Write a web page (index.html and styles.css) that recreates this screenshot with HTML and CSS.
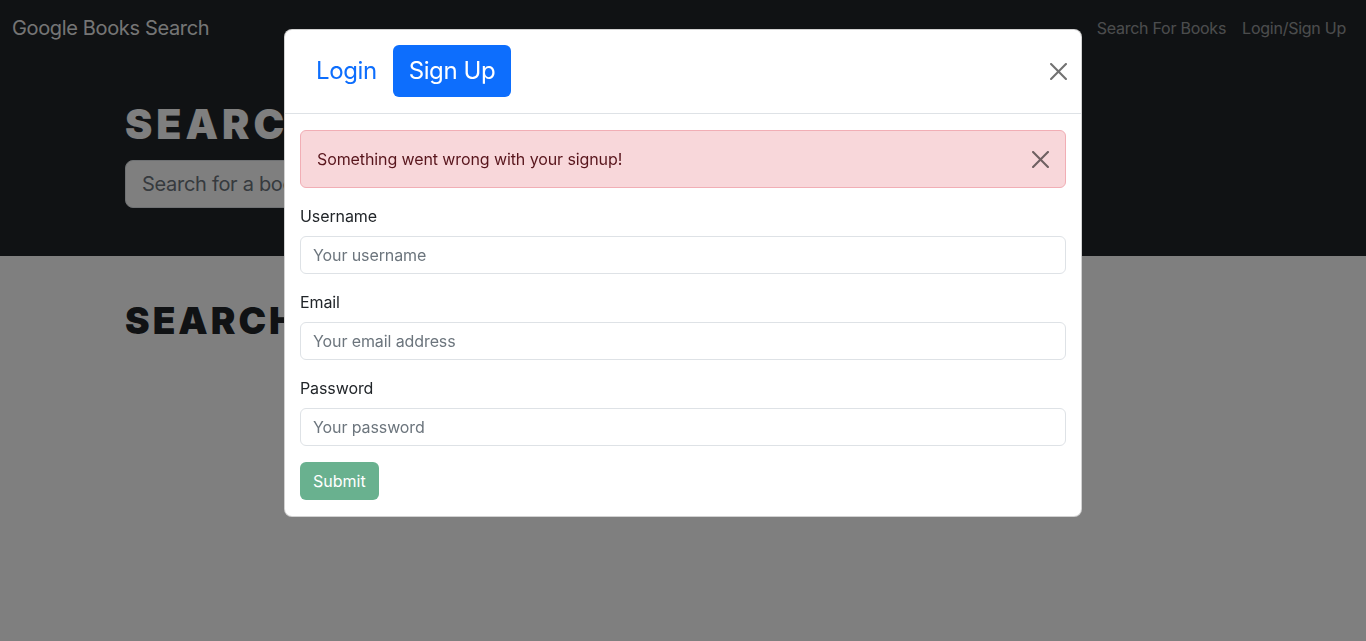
FILE: index.html
```html
<!DOCTYPE html>
<html lang="en">
<head>
<meta charset="utf-8">
<title>Google Books Search</title>
<link rel="stylesheet" href="styles.css">
</head>
<body>
<nav class="navbar">
  <a class="brand" href="#">Google Books Search</a>
  <div class="nav-links">
    <a href="#">Search For Books</a>
    <a href="#">Login/Sign Up</a>
  </div>
</nav>
<header class="hero">
  <div class="container">
    <h1 class="hero-title">Search for Books!</h1>
    <form class="search-row">
      <input class="search-input" type="text" placeholder="Search for a book">
      <button class="search-btn" type="button">Submit Search</button>
    </form>
  </div>
</header>
<main class="container results">
  <h2 class="results-title">Search for a book to begin</h2>
</main>

<div class="backdrop"></div>
<div class="modal-wrap">
  <div class="modal">
    <div class="modal-header">
      <div class="pills">
        <a class="pill" href="#">Login</a>
        <a class="pill active" href="#">Sign Up</a>
      </div>
      <button class="close-btn" type="button" aria-label="Close">
        <svg viewBox="0 0 16 16" width="16" height="16"><path d="M.293.293a1 1 0 0 1 1.414 0L8 6.586 14.293.293a1 1 0 1 1 1.414 1.414L9.414 8l6.293 6.293a1 1 0 0 1-1.414 1.414L8 9.414l-6.293 6.293a1 1 0 0 1-1.414-1.414L6.586 8 .293 1.707a1 1 0 0 1 0-1.414z"/></svg>
      </button>
    </div>
    <div class="modal-body">
      <div class="alert">
        <span>Something went wrong with your signup!</span>
        <button class="close-btn alert-close" type="button" aria-label="Close">
          <svg viewBox="0 0 16 16" width="16" height="16"><path d="M.293.293a1 1 0 0 1 1.414 0L8 6.586 14.293.293a1 1 0 1 1 1.414 1.414L9.414 8l6.293 6.293a1 1 0 0 1-1.414 1.414L8 9.414l-6.293 6.293a1 1 0 0 1-1.414-1.414L6.586 8 .293 1.707a1 1 0 0 1 0-1.414z"/></svg>
        </button>
      </div>
      <form class="signup">
        <div class="field">
          <label for="u">Username</label>
          <input id="u" class="input" type="text" placeholder="Your username">
        </div>
        <div class="field">
          <label for="e">Email</label>
          <input id="e" class="input" type="email" placeholder="Your email address">
        </div>
        <div class="field">
          <label for="p">Password</label>
          <input id="p" class="input" type="password" placeholder="Your password">
        </div>
        <button class="submit" type="button" disabled>Submit</button>
      </form>
    </div>
  </div>
</div>
</body>
</html>
```
FILE: styles.css
```css
* { box-sizing: border-box; }
html, body { margin: 0; padding: 0; }
body {
  font-family: Inter, "Noto Sans", sans-serif;
  font-size: 16px;
  line-height: 1.5;
  letter-spacing: -0.1px;
  color: #212529;
  background: #fff;
  height: 641px;
  overflow: hidden;
}
a { text-decoration: none; }

.navbar {
  background: #212529;
  height: 56px;
  display: flex;
  align-items: center;
  justify-content: space-between;
  padding: 0 12px;
}
.brand {
  color: rgba(255,255,255,.92);
  font-size: 20px;
  line-height: 30px;
  letter-spacing: -0.35px;
}
.nav-links { display: flex; }
.nav-links a {
  color: rgba(255,255,255,.55);
  padding: 8px;
  letter-spacing: -0.25px;
}

.container {
  width: 1140px;
  margin: 0 auto;
  padding: 0 12px;
}
.hero {
  background: #212529;
  padding: 44px 0 48px;
}
.hero-title {
  margin: 0 0 11px;
  color: #fff;
  font-size: 41px;
  line-height: 49px;
  font-weight: 900;
  letter-spacing: 4px;
  text-transform: uppercase;
}
.search-row { display: flex; gap: 24px; }
.search-input {
  width: 736px;
  height: 48px;
  border: 1px solid #dee2e6;
  border-radius: 8px;
  padding: 8px 16px;
  font-family: inherit;
  font-size: 20px;
  letter-spacing: -0.3px;
  color: #212529;
  background: #fff;
}
.search-input::placeholder { color: #6c757d; }
.search-btn {
  height: 48px;
  border: 0;
  border-radius: 8px;
  background: #198754;
  color: #fff;
  font-family: inherit;
  font-size: 20px;
  padding: 0 16px;
}
.results { padding-top: 43px; }
.results-title {
  margin: 0;
  font-size: 37px;
  line-height: 44px;
  font-weight: 900;
  letter-spacing: 3px;
  text-transform: uppercase;
  color: #212529;
}

.backdrop {
  position: fixed;
  inset: 0;
  background: rgba(0,0,0,.5);
}
.modal-wrap {
  position: fixed;
  inset: 0;
  display: flex;
  justify-content: center;
  align-items: flex-start;
  padding-top: 29px;
}
.modal {
  width: 798px;
  background: #fff;
  border: 1px solid rgba(0,0,0,.175);
  border-radius: 8px;
}
.modal-header {
  display: flex;
  align-items: center;
  justify-content: space-between;
  padding: 15px 14px 16px 15px;
  border-bottom: 1px solid #dee2e6;
}
.pills { display: flex; }
.pill {
  font-size: 24px;
  line-height: 36px;
  padding: 8px 16px;
  color: #0d6efd;
  border-radius: 6px;
  letter-spacing: -0.4px;
}
.pill.active { background: #0d6efd; color: #fff; }
.close-btn {
  border: 0;
  background: transparent;
  padding: 0;
  width: 17px;
  height: 17px;
  display: flex;
  align-items: center;
  justify-content: center;
  cursor: pointer;
}
.close-btn svg { width: 17px; height: 17px; fill: #000; opacity: .55; }

.modal-body { padding: 16px 15px 16px 15px; }
.alert {
  display: flex;
  align-items: center;
  justify-content: space-between;
  background: #f8d7da;
  border: 1px solid #f1aeb5;
  border-radius: 6px;
  color: #58151c;
  padding: 16px;
  height: 58px;
  margin-bottom: 16px;
}
.field { margin-bottom: 16px; }
.field label {
  display: block;
  margin-bottom: 8px;
  line-height: 24px;
}
.input {
  display: block;
  width: 100%;
  height: 38px;
  border: 1px solid #dee2e6;
  border-radius: 6px;
  padding: 6px 12px;
  font-family: inherit;
  font-size: 16px;
  letter-spacing: -0.1px;
  color: #212529;
  background: #fff;
}
.input::placeholder { color: #6c757d; }
.submit {
  display: block;
  height: 38px;
  border: 0;
  border-radius: 6px;
  padding: 6px 13px;
  font-family: inherit;
  font-size: 16px;
  background: #198754;
  color: #fff;
  opacity: .65;
}
```
